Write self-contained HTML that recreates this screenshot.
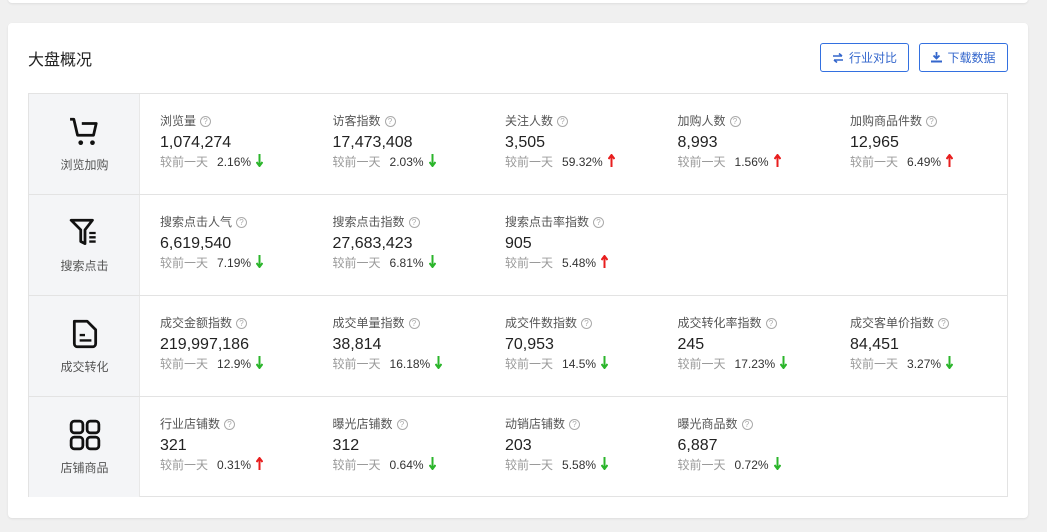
<!DOCTYPE html>
<html><head><meta charset="utf-8"><style>
*{margin:0;padding:0;box-sizing:border-box}
body{width:1047px;height:532px;background:#f0f0f0;font-family:"Liberation Sans","Noto Sans CJK SC",sans-serif;position:relative;overflow:hidden;color:#333}
.top{position:absolute;left:8px;top:-10px;width:1020px;height:13px;background:#fff;border-radius:4px;box-shadow:0 1px 2px rgba(0,0,0,.08)}
.card{position:absolute;left:8px;top:23px;width:1020px;height:495px;background:#fff;border-radius:4px;box-shadow:0 1px 2px rgba(0,0,0,.08)}
.title{position:absolute;left:20px;top:23px;font-size:16px;color:#222}
.btn{position:absolute;top:20px;height:29px;border:1px solid #3370e0;border-radius:3px;color:#3366cc;font-size:12px;display:flex;align-items:center;justify-content:center;gap:5px}
.tbl{position:absolute;left:20px;top:70px;width:980px;height:404px;border:1px solid #e3e3e3}
.row{position:absolute;left:0;width:978px;height:101px;border-bottom:1px solid #e3e3e3}
.row.last{border-bottom:none;height:100px}
.side{position:absolute;left:0;top:0;width:111px;height:100%;background:#f4f5f7;border-right:1px solid #e8e8e8}
.side svg{position:absolute;left:40px;top:22px}
.side span{position:absolute;left:0;width:111px;top:62px;text-align:center;font-size:12px;color:#555}
.m{position:absolute;top:0}
.l{position:absolute;top:18px;font-size:12px;color:#555;white-space:nowrap}
.q{display:inline-block;width:11px;height:11px;border:1px solid #aaa;border-radius:50%;font-size:8px;line-height:9px;text-align:center;color:#aaa;margin-left:4px;vertical-align:1px}
.v{position:absolute;top:40px;font-size:16px;color:#222;white-space:nowrap}
.c{position:absolute;top:59px;font-size:12px;color:#999;white-space:nowrap}
.c b{font-weight:normal;color:#333;margin-left:9px}
.a{display:inline-block;margin-left:5px;vertical-align:-1px}
</style></head><body>
<div class="top"></div>
<div class="card">
<div class="title">大盘概况</div>
<div class="btn" style="left:812px;width:89px"><svg width="12" height="10" viewBox="0 0 12 10"><path d="M1 3h9M7 0.5l3 2.5M11 7H2M5 9.5L2 7" stroke="#3366cc" stroke-width="1.6" fill="none"/></svg>行业对比</div>
<div class="btn" style="left:911px;width:89px"><svg width="11" height="11" viewBox="0 0 11 11"><path d="M5.5 0v6M2.5 3.5l3 3 3-3" stroke="#3366cc" stroke-width="1.8" fill="none"/><rect x="0" y="8.5" width="11" height="2" fill="#3366cc"/></svg>下载数据</div>
<div class="tbl">
<div class="row" style="top:0"><div class="side"><svg width="32" height="32" viewBox="0 0 30 30"><path d="M1 3h3.5l3.5 15h15l2.5-11H12" stroke="#111" stroke-width="2.6" fill="none" stroke-linejoin="round"/><circle cx="11" cy="25" r="2.2" fill="#111"/><circle cx="22" cy="25" r="2.2" fill="#111"/></svg><span>浏览加购</span></div></div>
<div class="row" style="top:101px"><div class="side"><svg width="32" height="32" viewBox="0 0 30 30"><path d="M2 3h20l-7 9v13l-4-2v-11z" stroke="#111" stroke-width="2.6" fill="none" stroke-linejoin="round"/><path d="M19 15h6M19 19h6M19 23h6" stroke="#111" stroke-width="2.2"/></svg><span>搜索点击</span></div></div>
<div class="row" style="top:202px"><div class="side"><svg width="32" height="32" viewBox="0 0 30 30"><path d="M5 3h12l8 8v13a3 3 0 0 1-3 3H8a3 3 0 0 1-3-3z" stroke="#111" stroke-width="2.6" fill="none" stroke-linejoin="round"/><path d="M10 16h5M10 21h11" stroke="#111" stroke-width="2.2"/></svg><span>成交转化</span></div></div>
<div class="row last" style="top:303px"><div class="side"><svg width="32" height="32" viewBox="0 0 30 30"><g stroke="#111" stroke-width="2.6" fill="none"><rect x="2" y="2" width="11" height="11" rx="3"/><rect x="17" y="2" width="11" height="11" rx="3"/><rect x="2" y="17" width="11" height="11" rx="3"/><rect x="17" y="17" width="11" height="11" rx="3"/></g></svg><span>店铺商品</span></div></div>
</div>
</div>
<div id="m" style="position:absolute;left:29px;top:94px"></div>
<script>
var d=[
[["浏览量","1,074,274","2.16%",0],["访客指数","17,473,408","2.03%",0],["关注人数","3,505","59.32%",1],["加购人数","8,993","1.56%",1],["加购商品件数","12,965","6.49%",1]],
[["搜索点击人气","6,619,540","7.19%",0],["搜索点击指数","27,683,423","6.81%",0],["搜索点击率指数","905","5.48%",1]],
[["成交金额指数","219,997,186","12.9%",0],["成交单量指数","38,814","16.18%",0],["成交件数指数","70,953","14.5%",0],["成交转化率指数","245","17.23%",0],["成交客单价指数","84,451","3.27%",0]],
[["行业店铺数","321","0.31%",1],["曝光店铺数","312","0.64%",0],["动销店铺数","203","5.58%",0],["曝光商品数","6,887","0.72%",0]]];
var dn='<svg class="a" width="7" height="13" viewBox="0 0 7 13"><path d="M3.5 0v11M0.5 8l3 4 3-4" stroke="#2bb52b" stroke-width="2" fill="none"/></svg>';
var up='<svg class="a" width="7" height="13" viewBox="0 0 7 13"><path d="M3.5 13V2M0.5 5l3-4 3 4" stroke="#e81e1e" stroke-width="2" fill="none"/></svg>';
var h="";d.forEach(function(r,i){r.forEach(function(c,j){var x=131+j*172.5,y=i*101;
h+='<div class="m" style="left:'+x+'px;top:'+y+'px"><div class="l">'+c[0]+'<span class="q">?</span></div><div class="v">'+c[1]+'</div><div class="c">较前一天<b>'+c[2]+'</b>'+(c[3]?up:dn)+'</div></div>';});});
document.getElementById("m").innerHTML=h;
</script>
</body></html>
